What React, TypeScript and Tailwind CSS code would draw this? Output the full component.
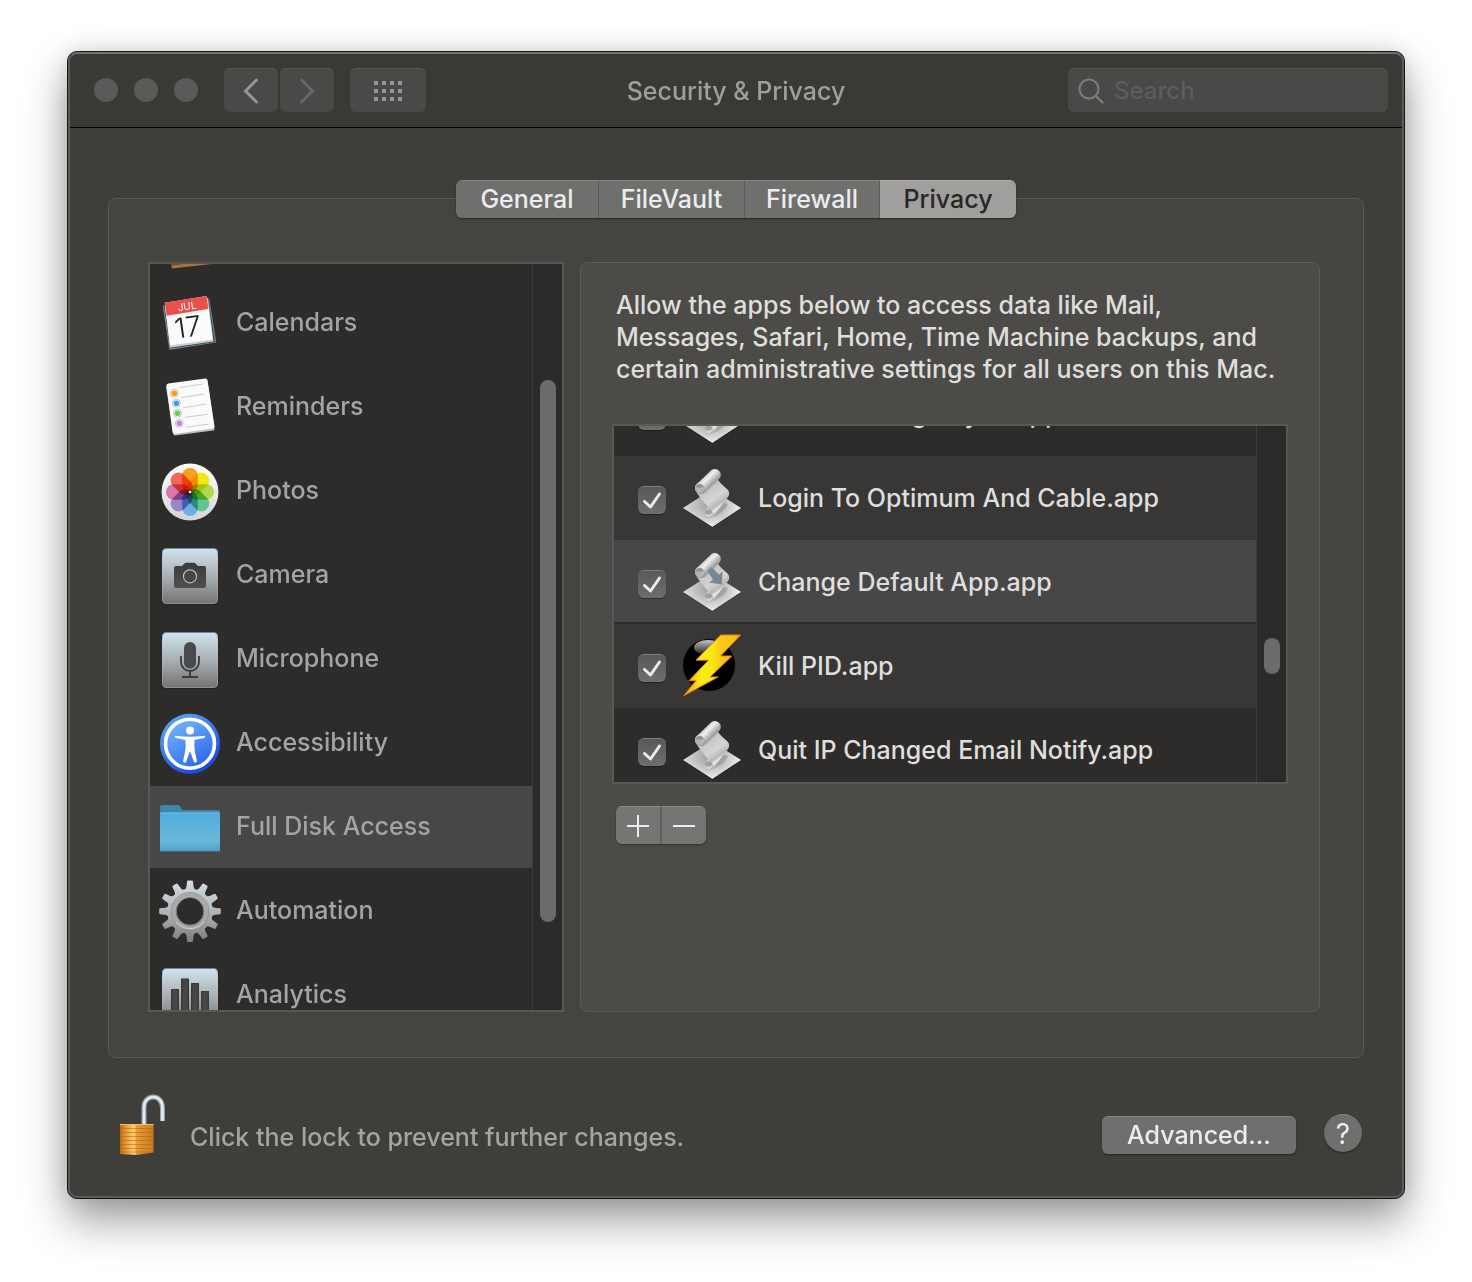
import { useLayoutEffect, useRef, useState } from "react";
import type { ReactNode } from "react";

function TileIcon({ children }: { children: ReactNode }) {
  return (
    <svg viewBox="0 0 64 64" className="size-16 shrink-0" aria-hidden="true">
      <defs>
        <linearGradient id="tile" x1="0" y1="0" x2="0" y2="1">
          <stop offset="0" stopColor="#d0e3ec" />
          <stop offset="0.5" stopColor="#a9b0b4" />
          <stop offset="1" stopColor="#737373" />
        </linearGradient>
        <linearGradient id="tileEdge" x1="0" y1="0" x2="0" y2="1">
          <stop offset="0" stopColor="#6d86b8" />
          <stop offset="0.15" stopColor="#c2d3dd" />
          <stop offset="1" stopColor="#8f8f8f" />
        </linearGradient>
        <linearGradient id="ink" x1="0" y1="0" x2="0" y2="1">
          <stop offset="0" stopColor="#3a3a3a" />
          <stop offset="1" stopColor="#505050" />
        </linearGradient>
      </defs>
      <rect x="3.5" y="5" width="57" height="57" rx="4" fill="#1c1c1c" opacity="0.6" />
      <rect x="4.5" y="5.5" width="55" height="55" rx="3.5" fill="url(#tile)" stroke="url(#tileEdge)" />
      {children}
    </svg>
  );
}

function ContactsIcon() {
  return (
    <svg viewBox="0 0 64 64" className="size-16 shrink-0" aria-hidden="true">
      <path d="M6 10 L46 4 L54 57 L14 61.5 Z" fill="#a9753a" />
      <path d="M13.5 58 L53.5 53" stroke="#6f4617" strokeWidth="1" />
    </svg>
  );
}

function CalendarIcon() {
  return (
    <svg viewBox="0 0 64 64" className="size-16 shrink-0" aria-hidden="true">
      <path d="M4.7 14.7 L51.3 7.3 L58.3 51.5 L11.3 59 Z" fill="#6f8594" />
      <path d="M6 14 L50.5 6.5 L56.8 51 L12 57.5 Z" fill="#2f3a42" />
      <path d="M6.7 14 L50 7 L55.6 50.5 L12 56.8 Z" fill="#c9cdd0" />
      <path d="M6.7 11.7 L48.7 5 L54.6 48.5 L12 54.6 Z" fill="#fbfbfb" />
      <path d="M6.7 11.7 L48.7 5 L50.2 18 L8.7 24.7 Z" fill="#e8504c" />
      <g transform="rotate(-8 29 30)" fontFamily="Inter, sans-serif" textAnchor="middle">
        <text x="31" y="19" fontSize="10" fontWeight="400" fill="#fff">JUL</text>
        <text x="29" y="46" fontSize="28" fontWeight="300" fill="#222">17</text>
      </g>
    </svg>
  );
}

function RemindersIcon() {
  const dots = [
    [16.3, 18.3, "#fb9a0c"],
    [18.4, 28.3, "#2ba7ee"],
    [19.5, 38.3, "#69d24a"],
    [21.3, 48.3, "#cf7fe0"],
  ] as const;
  return (
    <svg viewBox="0 0 64 64" className="size-16 shrink-0" aria-hidden="true">
      <path d="M9.5 12 L48 6 L55 54 L17 59 Z" fill="#bdbdbd" stroke="#bdbdbd" strokeWidth="3" strokeLinejoin="round" />
      <path d="M10.5 10.5 L47.5 5.5 L54.5 51.5 L16.5 57 Z" fill="#fafafa" stroke="#fafafa" strokeWidth="4" strokeLinejoin="round" />
      {dots.map(([x, y, color]) => (
        <g key={color}>
          <circle cx={x} cy={y} r="4" fill="#fff" stroke="#a8a8a8" strokeWidth="0.7" />
          <circle cx={x} cy={y} r="2.8" fill={color} />
        </g>
      ))}
      <path
        d="M21.3 12.7 L44.7 9 M23 22.7 L46 19 M25.3 32.7 L48.7 29 M26.7 42.3 L49.7 39.3 M28 52.3 L51.3 49"
        stroke="#c4c4c4"
        strokeWidth="0.9"
      />
    </svg>
  );
}

function PhotosIcon() {
  const petals = ["#fb9d1f", "#f5e617", "#b3d84b", "#62c592", "#6cb0e8", "#9a86c6", "#d977aa", "#f4655a"];
  return (
    <svg viewBox="0 0 64 64" className="size-16 shrink-0" aria-hidden="true">
      <defs>
        <linearGradient id="disc" x1="0" y1="0" x2="0" y2="1">
          <stop offset="0" stopColor="#ffffff" />
          <stop offset="1" stopColor="#d5d5d5" />
        </linearGradient>
      </defs>
      <circle cx="32" cy="33" r="28.5" fill="url(#disc)" />
      <g className="isolate">
        {petals.map((color, i) => (
          <rect
            key={color}
            x="24.2"
            y="9"
            width="15.6"
            height="24.5"
            rx="7.5"
            fill={color}
            transform={`rotate(${i * 45} 32 33)`}
            className="mix-blend-multiply"
          />
        ))}
      </g>
      <circle cx="32" cy="33" r="1.3" fill="#fff" />
    </svg>
  );
}

function CameraIcon() {
  return (
    <TileIcon>
      <path
        d="M18 23 H24 L26.5 20.4 Q27 19.8 28 19.8 H36 Q37 19.8 37.5 20.4 L40 23 H46 Q48 23 48 25 V43 Q48 45 46 45 H18 Q16 45 16 43 V25 Q16 23 18 23 Z"
        fill="url(#ink)"
      />
      <circle cx="32" cy="33.3" r="6.5" fill="#3a3a3a" stroke="#b9bec1" strokeWidth="1.2" />
      <circle cx="32" cy="33.3" r="4.8" fill="#484848" />
    </TileIcon>
  );
}

function MicrophoneIcon() {
  return (
    <TileIcon>
      <rect x="26" y="15" width="12" height="26.5" rx="6" fill="#4a4a4a" />
      <path d="M23 29 V35 A9 9 0 0 0 41 35 V29" fill="none" stroke="#3c3c3c" strokeWidth="1.8" />
      <path d="M32 44 V50 M24 50 H40" stroke="#3c3c3c" strokeWidth="2" />
    </TileIcon>
  );
}

function AccessibilityIcon() {
  return (
    <svg viewBox="0 0 64 64" className="size-16 shrink-0" aria-hidden="true">
      <defs>
        <linearGradient id="blueRim" x1="0.2" y1="0" x2="0.8" y2="1">
          <stop offset="0" stopColor="#5aa6f0" />
          <stop offset="1" stopColor="#1440e0" />
        </linearGradient>
        <linearGradient id="blueFill" x1="0.2" y1="0" x2="0.8" y2="1">
          <stop offset="0" stopColor="#74b6f9" />
          <stop offset="1" stopColor="#2a63ec" />
        </linearGradient>
      </defs>
      <circle cx="32" cy="32.7" r="30" fill="url(#blueRim)" />
      <circle cx="32" cy="32.7" r="24.5" fill="url(#blueFill)" stroke="#fff" strokeWidth="3.6" />
      <circle cx="32" cy="19.5" r="4" fill="#fff" />
      <path
        d="M17.5 24.8 Q32 26.6 46.5 24.8 Q48 25.5 46.8 26.7 L36.6 29 Q36 35 36.8 40 L39 50.5 Q37.5 52.5 36 51 L32.4 41 H31.6 L28 51 Q26.5 52.5 25 50.5 L27.2 40 Q28 35 27.4 29 L17.2 26.7 Q16 25.5 17.5 24.8 Z"
        fill="#fff"
      />
    </svg>
  );
}

function FolderIcon() {
  return (
    <svg viewBox="0 0 64 64" className="size-16 shrink-0" aria-hidden="true">
      <defs>
        <linearGradient id="folder" x1="0" y1="0" x2="0" y2="1">
          <stop offset="0" stopColor="#50acdd" />
          <stop offset="0.8" stopColor="#6cb9da" />
          <stop offset="1" stopColor="#4f9cc0" />
        </linearGradient>
      </defs>
      <path d="M2 22 V12 Q2 10 4 10 H20 Q21.5 10 22.3 11.5 L24.5 15 H60.5 Q62 15 62 17 V22 Z" fill="#3f87a8" />
      <rect x="2" y="18" width="60" height="39" rx="1.5" fill="#2f6f8c" />
      <rect x="2" y="17.5" width="60" height="38.5" rx="1.5" fill="url(#folder)" />
      <path d="M2.5 18 H61.5" stroke="#7cc6ec" strokeWidth="0.8" />
      <path d="M2 48 H62 M2 50.5 H62 M2 53 H62" stroke="#5aa6c8" strokeWidth="0.8" />
    </svg>
  );
}

function GearIcon() {
  const teeth = Array.from({ length: 12 }, (_, i) => i * 30);
  return (
    <svg viewBox="0 0 64 64" className="size-16 shrink-0" aria-hidden="true">
      <defs>
        <linearGradient id="gear" gradientUnits="userSpaceOnUse" x1="0" y1="1" x2="0" y2="63">
          <stop offset="0" stopColor="#d3dee3" />
          <stop offset="0.5" stopColor="#b3b6b8" />
          <stop offset="1" stopColor="#7c7c7c" />
        </linearGradient>
        <mask id="gearMask">
          <circle cx="32" cy="32.3" r="22.8" fill="#fff" />
          {teeth.map((deg) => (
            <path
              key={deg}
              d="M26.8 11 Q28.8 9 28.8 4 Q28.8 1.5 29.8 1.5 H34.2 Q35.2 1.5 35.2 4 Q35.2 9 37.2 11 Z"
              fill="#fff"
              transform={`rotate(${deg} 32 32.3)`}
            />
          ))}
          <circle cx="32" cy="32.3" r="13.5" fill="#000" />
        </mask>
      </defs>
      <rect width="64" height="64" fill="url(#gear)" mask="url(#gearMask)" />
      <circle cx="32" cy="32.3" r="18.8" fill="none" stroke="#8f9497" strokeWidth="1" />
      <circle cx="32" cy="32.3" r="16.5" fill="none" stroke="#a6a9ab" strokeWidth="3.5" />
      <circle cx="32" cy="32.3" r="14" fill="none" stroke="#7a7a7a" strokeWidth="1" />
      <path d="M18 43 A18 18 0 0 0 46 43" fill="none" stroke="#d0d0d0" strokeWidth="1" />
    </svg>
  );
}

function AnalyticsIcon() {
  return (
    <TileIcon>
      <path d="M13 26 H21 V56 H13 Z M23 15.5 H31 V56 H23 Z M33 20 H41 V56 H33 Z M43 28 H51 V56 H43 Z" fill="#3a3a3a" />
      <path d="M14.5 27 H19.5 V56 H14.5 Z M24.5 17 H29.5 V56 H24.5 Z M34.5 21 H39.5 V56 H34.5 Z M44.5 29 H49.5 V56 H44.5 Z" fill="#474747" />
    </TileIcon>
  );
}

function ScriptIcon({ arrow = false }: { arrow?: boolean }) {
  return (
    <svg viewBox="0 0 64 64" className="size-16 shrink-0" aria-hidden="true">
      <defs>
        <linearGradient id="plate" x1="0" y1="0" x2="1" y2="0">
          <stop offset="0" stopColor="#dcdcdc" />
          <stop offset="0.4" stopColor="#a8a8a8" />
          <stop offset="0.65" stopColor="#b4b4b4" />
          <stop offset="1" stopColor="#f2f2f2" />
        </linearGradient>
        <linearGradient id="plateFade" x1="0" y1="0" x2="0" y2="1">
          <stop offset="0.5" stopColor="#e6e6e6" stopOpacity="0" />
          <stop offset="1" stopColor="#ececec" />
        </linearGradient>
        <linearGradient id="sheet" gradientUnits="userSpaceOnUse" x1="27" y1="18" x2="44" y2="42">
          <stop offset="0" stopColor="#a3a3a3" />
          <stop offset="0.2" stopColor="#c9c7c8" />
          <stop offset="0.55" stopColor="#d6d4d5" />
          <stop offset="0.78" stopColor="#b9b8b8" />
          <stop offset="0.9" stopColor="#ebe8ea" />
          <stop offset="1" stopColor="#b9b9b9" />
        </linearGradient>
        <linearGradient id="roll" gradientUnits="userSpaceOnUse" x1="22" y1="10" x2="31" y2="19">
          <stop offset="0" stopColor="#b5b5b5" />
          <stop offset="0.45" stopColor="#f2eff1" />
          <stop offset="1" stopColor="#a0a0a0" />
        </linearGradient>
      </defs>
      <path d="M3 43 L32.3 61.8 L61 43 Z" fill="#1d1d1d" opacity="0.5" />
      <path d="M3 42 L32 23.5 L61 42 L32.3 60.7 Z" fill="url(#plate)" />
      <path d="M3 42 L32 23.5 L61 42 L32.3 60.7 Z" fill="url(#plateFade)" />
      <path d="M33 51 Q44 47 48 38 L36 34 Z" fill="#8a8a8a" opacity="0.5" />
      <path
        d="M17 27 L24 18 L37.5 13 C39.5 17 44 20 48 24 Q50.5 27.5 48 31 L36.5 46 C34 51.5 29 53.5 26 50.5 C24 48 25 44 28 41 C25 37 20 32 17 27 Z"
        fill="url(#sheet)"
      />
      <path d="M15 22 C15 18.5 17 17.5 20 15 L31.5 4 C34 2.3 38 3 40 6 C41.8 9 40.5 12 38 14 L26 26 C22 30 15 28 15 22 Z" fill="url(#roll)" />
      <ellipse cx="20" cy="22.8" rx="4.6" ry="5" fill="#949494" transform="rotate(-30 20 22.8)" />
      <path d="M16 21 Q20 23.5 24.5 20 Q25 27 20 27.5 Q15.5 26.5 16 21 Z" fill="#b4b4b4" />
      <ellipse cx="28.8" cy="48" rx="3.8" ry="4.2" fill="#a0a0a0" />
      <path d="M25.2 47.5 Q29 50 32.4 46.5 Q32.5 51.7 28.8 52 Q25 51.5 25.2 47.5 Z" fill="#d0d0d0" />
      {arrow && <path d="M27 21 L31.5 17 L39 24.5 L42.5 21.5 L42 34.5 L29 32.5 L33 29.5 Z" fill="#74889a" />}
    </svg>
  );
}

function BoltIcon() {
  return (
    <svg viewBox="0 0 64 64" className="size-16 shrink-0" aria-hidden="true">
      <defs>
        <linearGradient id="bolt" x1="0" y1="0" x2="1" y2="0">
          <stop offset="0" stopColor="#f99a12" />
          <stop offset="0.3" stopColor="#f6ee14" />
          <stop offset="0.5" stopColor="#f8e815" />
          <stop offset="0.65" stopColor="#fcc816" />
          <stop offset="1" stopColor="#fbb814" />
        </linearGradient>
        <linearGradient id="gloss" x1="0" y1="0" x2="0" y2="1">
          <stop offset="0" stopColor="#c4c4c4" />
          <stop offset="1" stopColor="#1a1a1a" />
        </linearGradient>
      </defs>
      <circle cx="29" cy="31" r="26" fill="#000" />
      <ellipse cx="28" cy="13.5" rx="14" ry="7.5" fill="url(#gloss)" />
      <path
        d="M40.7 1 H60.5 L40.5 22 H51.8 L30 43 H38 L4 61.5 L16 46.7 H9 L28.5 26.2 H16 Z"
        fill="url(#bolt)"
        stroke="#f0801a"
        strokeWidth="1"
        strokeLinejoin="round"
      />
    </svg>
  );
}

function LockIcon() {
  return (
    <svg viewBox="0 0 48 64" className="h-16 w-12" aria-hidden="true">
      <defs>
        <linearGradient id="brass" x1="0" y1="0" x2="1" y2="0">
          <stop offset="0" stopColor="#b96a12" />
          <stop offset="0.15" stopColor="#e0922e" />
          <stop offset="0.42" stopColor="#ffd173" />
          <stop offset="0.5" stopColor="#e69a38" />
          <stop offset="1" stopColor="#c97c20" />
        </linearGradient>
      </defs>
      <path d="M26 32 V14 C26 1 44.5 0 44.5 15 V28" fill="none" stroke="#93a2ab" strokeWidth="5" />
      <path d="M26 32 V14 C26 1 44.5 0 44.5 15 V28" fill="none" stroke="#e4ebef" strokeWidth="2.6" />
      <path d="M2 31 H35.5 V59.5 L18 62 L2 61 Z" fill="url(#brass)" />
      <path d="M2 31.5 H35.5" stroke="#f6bd62" />
      <path
        d="M2 35.5 H35.5 M2 39.5 H35.5 M2 43.5 H35.5 M2 47.5 H35.5 M2 51.5 H35.5 M2 55.5 H35.5 M2 59 H35"
        stroke="#b0640f"
        strokeWidth="1"
        opacity="0.55"
      />
    </svg>
  );
}

const tabs = [
  { name: "General", width: "w-[143px]" },
  { name: "FileVault", width: "w-[146px]" },
  { name: "Firewall", width: "w-[135px]" },
  { name: "Privacy", width: "w-[136px]" },
];

const services = [
  { name: "Contacts", icon: <ContactsIcon /> },
  { name: "Calendars", icon: <CalendarIcon /> },
  { name: "Reminders", icon: <RemindersIcon /> },
  { name: "Photos", icon: <PhotosIcon /> },
  { name: "Camera", icon: <CameraIcon /> },
  { name: "Microphone", icon: <MicrophoneIcon /> },
  { name: "Accessibility", icon: <AccessibilityIcon /> },
  { name: "Full Disk Access", icon: <FolderIcon /> },
  { name: "Automation", icon: <GearIcon /> },
  { name: "Analytics", icon: <AnalyticsIcon /> },
];

const apps = [
  { name: "Close Message By Id.app", icon: <ScriptIcon /> },
  { name: "Login To Optimum And Cable.app", icon: <ScriptIcon /> },
  { name: "Change Default App.app", icon: <ScriptIcon arrow /> },
  { name: "Kill PID.app", icon: <BoltIcon /> },
  { name: "Quit IP Changed Email Notify.app", icon: <ScriptIcon /> },
];

export default function App() {
  const [tab, setTab] = useState("Privacy");
  const [service, setService] = useState("Full Disk Access");
  const [selectedApp, setSelectedApp] = useState("Change Default App.app");
  const serviceList = useRef<HTMLUListElement>(null);
  const appList = useRef<HTMLUListElement>(null);

  // Both lists open part way down
  useLayoutEffect(() => {
    if (serviceList.current) serviceList.current.scrollTop = 66;
    if (appList.current) appList.current.scrollTop = 54;
  }, []);

  return (
    <div className="min-h-screen bg-white px-[67px] pt-[51px] pb-[83px] font-[Inter,sans-serif] text-[25px] leading-8 font-medium text-[#dfdedd]">
      <main className="rounded-[10px] border border-[#161616] bg-[#403e3b] shadow-[0_22px_44px_rgba(0,0,0,0.38),0_0_24px_rgba(0,0,0,0.12)]">
        <div className="rounded-[9px] border-2 border-[#5c5b59] border-t-[#72716f]">
          <header className="flex h-[74px] items-center justify-between rounded-t-lg border-b border-black bg-[#3b3936] px-3.5 pb-px">
            <div className="flex flex-1 items-center">
              <div className="ml-2.5 flex gap-4">
                <button aria-label="Close" className="size-6 rounded-full bg-[#5c5a58]" />
                <button aria-label="Minimize" className="size-6 rounded-full bg-[#5c5a58]" />
                <button aria-label="Zoom" className="size-6 rounded-full bg-[#5c5a58]" />
              </div>
              <div className="ml-[26px] flex gap-0.5">
                <button aria-label="Back" className="flex h-11 w-[54px] items-center justify-center rounded-md border-t border-[#5a5957] bg-[#4a4947]">
                  <svg viewBox="0 0 16 26" className="h-[26px] w-4" fill="none" stroke="#969593" strokeWidth="3" strokeLinecap="round">
                    <path d="M13.5 2 L2.5 13 L13.5 24" />
                  </svg>
                </button>
                <button aria-label="Forward" className="flex h-11 w-[54px] items-center justify-center rounded-md border-t border-[#5a5957] bg-[#4a4947]">
                  <svg viewBox="0 0 16 26" className="h-[26px] w-4" fill="none" stroke="#676664" strokeWidth="3" strokeLinecap="round">
                    <path d="M2.5 2 L13.5 13 L2.5 24" />
                  </svg>
                </button>
              </div>
              <button aria-label="Show All" className="ml-4 flex h-11 w-19 items-center justify-center rounded-md border-t border-[#5a5957] bg-[#4a4947]">
                <svg viewBox="0 0 28 20" className="h-5 w-7" fill="#969593">
                  {[0, 8, 16].map((y) =>
                    [0, 8, 16, 24].map((x) => <rect key={`${x}-${y}`} x={x} y={y} width="4" height="4" />)
                  )}
                </svg>
              </button>
            </div>
            <h1 className="pt-0.5 text-[#a09f9d]">Security &amp; Privacy</h1>
            <div className="flex flex-1 justify-end">
              <label className="flex h-11 w-80 items-center gap-2.5 rounded-md border-t border-[#5a5957] bg-[#4a4947] pl-2.5">
                <svg viewBox="0 0 26 26" className="size-[26px] shrink-0" fill="none" stroke="#7f7e7c" strokeWidth="2">
                  <circle cx="11" cy="11" r="9.5" />
                  <path d="M17.5 17.5 L25 25" strokeWidth="2.4" />
                </svg>
                <input
                  type="search"
                  aria-label="Search"
                  placeholder="Search"
                  className="min-w-0 flex-1 bg-transparent text-2xl outline-none placeholder:text-[#5e5d5b]"
                />
              </label>
            </div>
          </header>

          <div className="px-[38px] pt-[52px]">
            <div role="tablist" className="relative z-10 mx-auto flex w-fit overflow-hidden rounded-md shadow-[0_1px_2px_rgba(0,0,0,0.4)]">
              {tabs.map((t) => (
                <button
                  key={t.name}
                  role="tab"
                  aria-selected={tab === t.name}
                  onClick={() => setTab(t.name)}
                  className={`${t.width} h-[38px] border-t pb-0.5 ${
                    tab === t.name
                      ? "border-t-[#b3b2b1] bg-[#a09f9d] text-[#272727]"
                      : "border-r border-r-[#5b5a59] border-t-[#848483] bg-[#6f6f6e] text-[#ececec]"
                  }`}
                >
                  {t.name}
                </button>
              ))}
            </div>

            <section className="-mt-5 flex gap-4 rounded-lg border border-[#595856] bg-[#464441] pt-[63px] pr-[43px] pb-[45px] pl-[39px]">
              <div className="flex h-[750px] w-[416px] shrink-0 border-2 border-[#595857] bg-[#2d2c2a]">
                <ul ref={serviceList} className="flex-1 overflow-y-auto [scrollbar-width:none]">
                  {services.map((s) => (
                    <li key={s.name} className="h-21">
                      <button
                        onClick={() => setService(s.name)}
                        className={`flex h-[82px] w-full items-center gap-3.5 pl-2 text-left text-[#a5a4a3] ${
                          service === s.name ? "bg-[#474747]" : ""
                        }`}
                      >
                        {s.icon}
                        <span className="pb-0.5">{s.name}</span>
                      </button>
                    </li>
                  ))}
                </ul>
                <div className="w-[30px] border-l border-[#3c3c3c] bg-[#2b2b2b] pt-[116px] pl-[7px]">
                  <div className="h-[542px] w-4 rounded-full bg-[#6b6b6b]" />
                </div>
              </div>

              <div className="min-w-0 flex-1 rounded-lg border border-[#5c5b59] bg-[#4d4b48] px-[31px] pt-[26px]">
                <p className="px-1 whitespace-nowrap">
                  Allow the apps below to access data like Mail,
                  <br />
                  Messages, Safari, Home, Time Machine backups, and
                  <br />
                  certain administrative settings for all users on this Mac.
                </p>
                <div className="mt-[39px] flex h-[360px] border-2 border-[#595857] bg-[#2d2c2a]">
                  <ul ref={appList} className="flex-1 overflow-y-auto [scrollbar-width:none]">
                    {apps.map((app) => (
                      <li
                        key={app.name}
                        onClick={() => setSelectedApp(app.name)}
                        className={`h-21 ${
                          selectedApp === app.name
                            ? "border-b-2 border-[#2d2c2a] bg-[#474747]"
                            : "odd:bg-[#2d2c2a] even:bg-[#383735]"
                        }`}
                      >
                        <label className="flex h-21 items-center pl-6">
                          <span className="relative mt-1 size-7">
                            <input
                              type="checkbox"
                              defaultChecked
                              className="peer block size-7 appearance-none rounded-md border-t border-[#7e7e7d] bg-linear-to-b from-[#595958] to-[#6e6e6d] shadow-[0_1px_1px_rgba(0,0,0,0.4)]"
                            />
                            <svg
                              viewBox="0 0 28 28"
                              className="pointer-events-none absolute inset-0 hidden peer-checked:block"
                              fill="none"
                              stroke="#ececec"
                              strokeWidth="3"
                              strokeLinecap="round"
                              strokeLinejoin="round"
                            >
                              <path d="M6.5 15.5 L12.5 21 L21.5 8" />
                            </svg>
                          </span>
                          <span className="mx-3.5">{app.icon}</span>
                          {app.name}
                        </label>
                      </li>
                    ))}
                  </ul>
                  <div className="w-[30px] border-l border-[#3c3c3c] bg-[#2b2b2b] pt-[212px] pl-[7px]">
                    <div className="h-9 w-4 rounded-full bg-[#6b6b6b]" />
                  </div>
                </div>
                <div className="mt-[22px] ml-1 flex w-fit overflow-hidden rounded-md shadow-[0_1px_2px_rgba(0,0,0,0.4)]">
                  <button aria-label="Add" className="flex h-[38px] w-[46px] items-center justify-center border-t border-r-2 border-t-[#8d8c8b] border-r-[#626160] bg-[#767574]">
                    <svg viewBox="0 0 22 22" className="size-[22px]" stroke="#ececec" strokeWidth="2">
                      <path d="M11 0 V22 M0 11 H22" />
                    </svg>
                  </button>
                  <button aria-label="Remove" className="flex h-[38px] w-11 items-center justify-center border-t border-t-[#8d8c8b] bg-[#767574]">
                    <svg viewBox="0 0 22 22" className="size-[22px]" stroke="#ececec" strokeWidth="2">
                      <path d="M0 11 H22" />
                    </svg>
                  </button>
                </div>
              </div>
            </section>

            <footer className="flex h-[138px] items-center pl-2.5">
              <button aria-label="Lock" className="pb-1">
                <LockIcon />
              </button>
              <p className="mt-5 ml-6 flex-1 text-[#a5a4a3]">Click the lock to prevent further changes.</p>
              <button className="mt-4 h-[38px] w-[194px] rounded-md border-t border-[#848483] bg-[#6f6f6e] pb-0.5 text-[#ececec] shadow-[0_1px_2px_rgba(0,0,0,0.4)]">
                Advanced...
              </button>
              <button
                aria-label="Help"
                className="mt-3 mr-0.5 ml-7 size-[38px] rounded-full border-t border-[#848483] bg-[#6f6f6e] text-[28px] font-normal text-[#ececec] shadow-[0_1px_2px_rgba(0,0,0,0.4)]"
              >
                ?
              </button>
            </footer>
          </div>
        </div>
      </main>
    </div>
  );
}
